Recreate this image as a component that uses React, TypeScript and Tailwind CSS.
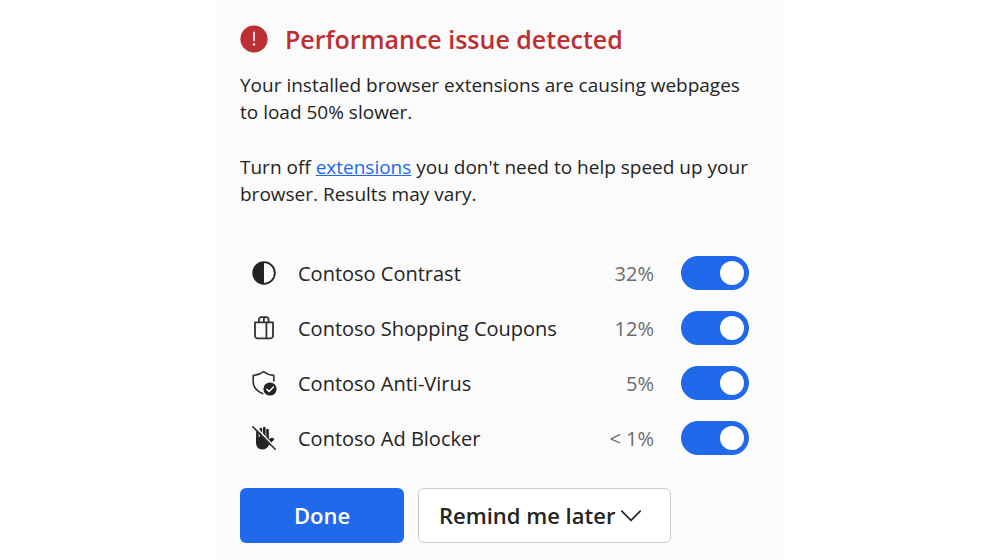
import { useState } from 'react'
import type { ReactNode } from 'react'

interface Extension {
  id: string
  name: string
  impact: string
  icon: ReactNode
}

const IconAlert = () => (
  <svg className="size-7 shrink-0" viewBox="0 0 28 28" fill="none" aria-hidden="true">
    <circle cx="14" cy="14" r="13.6" fill="#bc2f32" />
    <path d="M14 7.4v8.2" stroke="#fff" strokeWidth="1.6" strokeLinecap="round" />
    <circle cx="14" cy="19.4" r="1.2" fill="#fff" />
  </svg>
)

const IconContrast = () => (
  <svg className="size-6" viewBox="0 0 24 24" fill="none" aria-hidden="true">
    <circle cx="12" cy="12" r="10.8" stroke="#242424" strokeWidth="1.8" />
    <path d="M12 1.2a10.8 10.8 0 0 0 0 21.6z" fill="#242424" />
  </svg>
)

const IconCoupons = () => (
  <svg className="size-6" viewBox="0 0 24 24" fill="none" stroke="#333" strokeWidth="1.8" aria-hidden="true">
    <path d="M3 6.4h18v13.4a2.6 2.6 0 0 1-2.6 2.6H5.6A2.6 2.6 0 0 1 3 19.8z" strokeLinejoin="round" />
    <path d="M14.4 6.4v16" />
    <path d="M7 6.4V3.4a2.2 2.2 0 0 1 2.2-2.2h5.2a2.2 2.2 0 0 1 2.2 2.2v3M11.8 6.4v-3a2.2 2.2 0 0 1 1.6-2.2" />
  </svg>
)

const IconShield = () => (
  <svg className="size-6 overflow-visible" viewBox="0 0 24 24" fill="none" aria-hidden="true">
    <path
      d="M10.6 22.6C4.4 20 1.2 16.2 1.2 10.8V4.4C5.2 4.2 8.6 3 11.6.6c3 2.4 6.4 3.6 10.2 3.8V10"
      stroke="#333"
      strokeWidth="1.6"
      strokeLinejoin="round"
      strokeLinecap="round"
    />
    <circle cx="18" cy="18" r="6.6" fill="#242424" />
    <path d="m14.8 18.2 2.3 2.3 4.3-4.4" stroke="#fff" strokeWidth="1.5" strokeLinecap="round" strokeLinejoin="round" />
  </svg>
)

const IconBlocker = () => (
  <svg className="size-6" viewBox="0 0 24 24" fill="none" aria-hidden="true">
    <path
      d="M4 7.5v8.9c0 4.2 2.4 7 6.4 7 3.2 0 5-1.6 6.6-4.2l5-5.4c.6-.8-.2-1.8-1.2-1.9-1.8-.2-2.8.5-4.2 1.9V11H4z"
      fill="#242424"
    />
    <path d="M5.4 12V6M8.9 12V3M12.3 12V2M15.5 13V4" stroke="#242424" strokeWidth="2.6" strokeLinecap="round" />
    <path d="m2.6-.4 21 22.6" stroke="#fbfbfb" strokeWidth="1.5" />
    <path d="m.8.8 22.4 22.4" stroke="#333" strokeWidth="1.6" strokeLinecap="round" />
  </svg>
)

const IconChevron = () => (
  <svg className="h-3 w-5" viewBox="0 0 20 12" fill="none" aria-hidden="true">
    <path d="m.8 1.2 9.2 9.2 9.2-9.2" stroke="#242424" strokeWidth="1.7" strokeLinecap="round" strokeLinejoin="round" />
  </svg>
)

const EXTENSIONS: Extension[] = [
  { id: 'contrast', name: 'Contoso Contrast', impact: '32%', icon: <IconContrast /> },
  { id: 'coupons', name: 'Contoso Shopping Coupons', impact: '12%', icon: <IconCoupons /> },
  { id: 'antivirus', name: 'Contoso Anti-Virus', impact: '5%', icon: <IconShield /> },
  { id: 'adblocker', name: 'Contoso Ad Blocker', impact: '< 1%', icon: <IconBlocker /> },
]

const ExtensionRow = ({ extension }: { extension: Extension }) => {
  const [isEnabled, setIsEnabled] = useState(true)
  return (
    <li className="flex items-center">
      {extension.icon}
      <label htmlFor={extension.id} className="ml-[22px] grow">
        {extension.name}
      </label>
      <span className="mr-[27px] text-[#6b6b6b]">{extension.impact}</span>
      <input
        id={extension.id}
        type="checkbox"
        role="switch"
        checked={isEnabled}
        onChange={(e) => setIsEnabled(e.target.checked)}
        className="flex h-[34px] w-[68px] shrink-0 cursor-pointer appearance-none items-center rounded-full bg-gray-400 px-[5px] transition-colors before:size-6 before:rounded-full before:bg-white checked:justify-end checked:bg-[#2169eb]"
      />
    </li>
  )
}

export const App = () => {
  return (
    <div className="min-h-screen bg-white font-['Open_Sans','Noto_Sans',sans-serif] text-[20px] leading-[27px] text-[#242424]">
      <main className="mx-auto min-h-screen max-w-[568px] bg-[#fbfbfb] px-6 pt-[21px] pb-4">
        <div className="flex items-center gap-[17px]">
          <IconAlert />
          <h1 className="text-[25px] leading-9 font-semibold text-[#bc2f32]">Performance issue detected</h1>
        </div>
        <p className="mt-[15px] text-[19px]">
          Your installed browser extensions are causing webpages to load 50% slower.
        </p>
        <p className="mt-7 text-[19px]">
          Turn off{' '}
          <a href="#extensions" className="text-[#2169eb] underline">
            extensions
          </a>{' '}
          you don't need to help speed up your browser. Results may vary.
        </p>
        <ul className="mt-12 flex flex-col gap-[21px] pr-[11px] pl-3">
          {EXTENSIONS.map((extension) => (
            <ExtensionRow key={extension.id} extension={extension} />
          ))}
        </ul>
        <div className="mt-[33px] flex gap-[14px] text-[22px] font-semibold">
          <button type="button" className="h-[55px] w-[164px] rounded-md bg-[#2169eb] text-white">
            Done
          </button>
          <button
            type="button"
            className="flex h-[55px] w-[253px] items-center gap-[6px] rounded-md border border-[#cccccc] bg-white pl-5"
          >
            Remind me later
            <IconChevron />
          </button>
        </div>
      </main>
    </div>
  )
}

export default App
